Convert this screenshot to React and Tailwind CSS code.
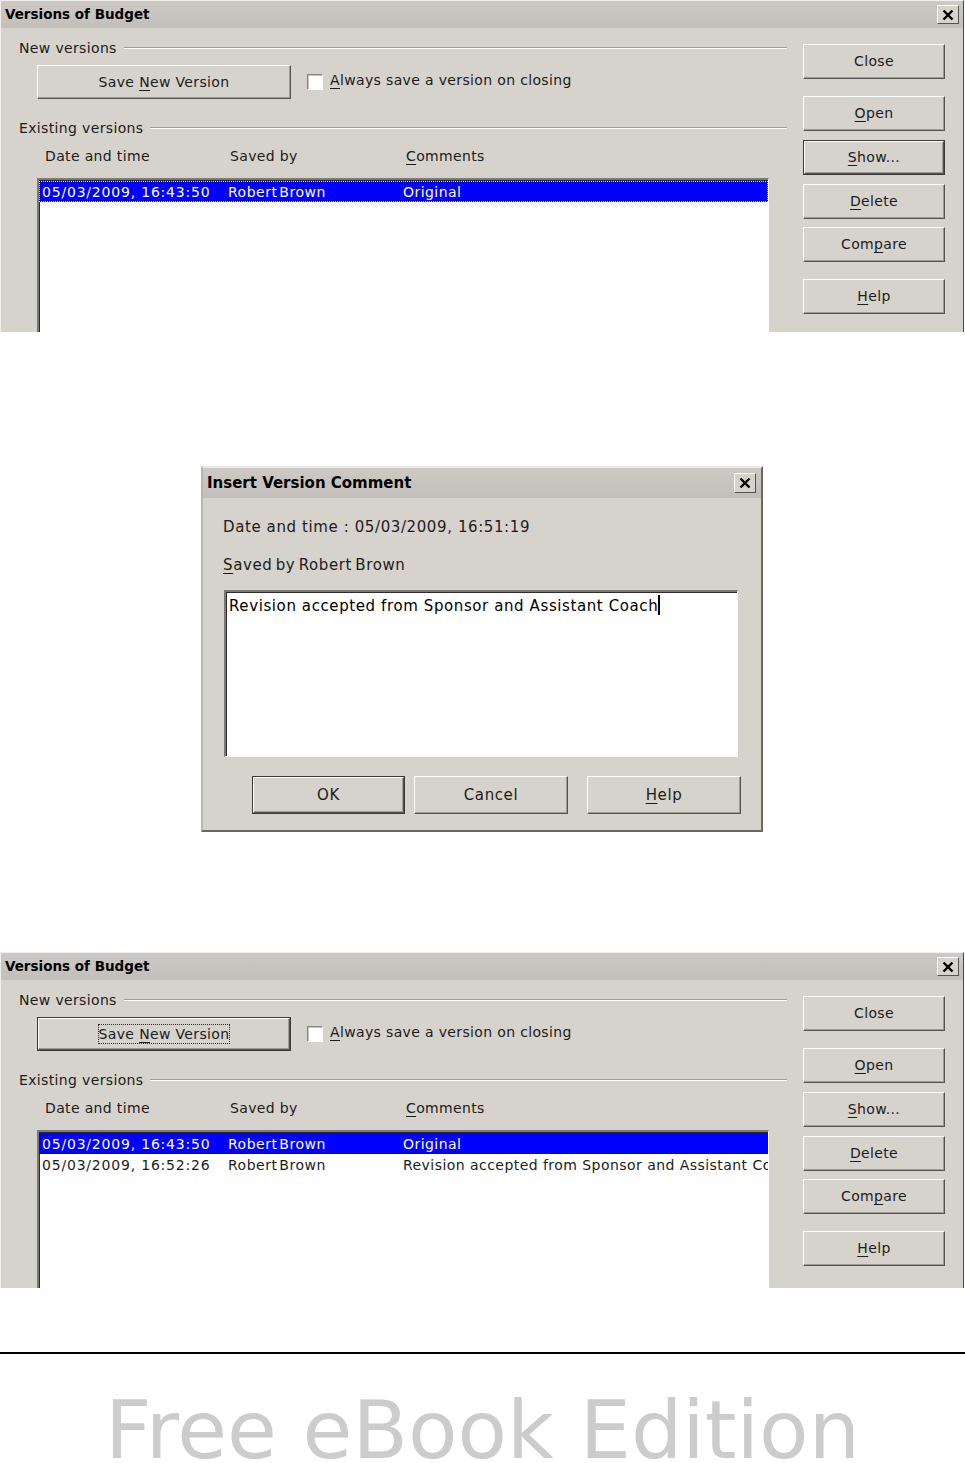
import React from 'react';

const U = ({ children }) => (
  <span className="underline decoration-1 underline-offset-[3px]">{children}</span>
);

const CloseBox = ({ className = '' }) => (
  <div className={`flex items-center justify-center border border-t-white border-l-white border-r-[#55534f] border-b-[#55534f] bg-[#d6d2cc] ${className}`}>
    <svg width="12" height="12" viewBox="0 0 12 12">
      <path d="M1.5 1.5 L10.5 10.5 M10.5 1.5 L1.5 10.5" stroke="#000" strokeWidth="2.4" />
    </svg>
  </div>
);

const Btn = ({ children, className = '', def = false, focus = false }) => (
  <div className={`${className} ${def ? 'border border-[#3a3937]' : ''}`}>
    <div className="flex h-full w-full items-center justify-center border border-t-white border-l-white border-r-[#55534f] border-b-[#55534f] bg-[#d6d2cc] shadow-[inset_-1px_-1px_0_#9e9b95] text-[#1c1c1c]">
      <span className={focus ? 'border border-dotted border-[#2a2a2a] leading-[18px]' : ''}>{children}</span>
    </div>
  </div>
);

const Group = ({ label, className = '' }) => (
  <div className={`flex h-[18px] items-center ${className}`}>
    <span className="pr-[7px] text-[#1c1c1c]">{label}</span>
    <div className="h-[2px] flex-1 border-t border-b border-t-[#a09d97] border-b-white" />
  </div>
);

const TitleBar = ({ title, className = '', textClass = '', boxClass = '' }) => (
  <div className={`flex items-center justify-between bg-gradient-to-b from-[#cdcac5] to-[#c2bfba] ${className}`}>
    <span className={`font-bold tracking-normal text-black ${textClass}`}>{title}</span>
    <CloseBox className={boxClass} />
  </div>
);

const VersionsDialog = ({ rows, saveDefault, showDefault, focusRow }) => (
  <div className="h-[336px] w-[964px] overflow-hidden border-t border-l border-r border-t-[#f0efed] border-l-[#f0efed] border-r-[#4a4946] bg-[#d6d2cc] text-[14px] tracking-[0.35px]">
    <TitleBar title="Versions of Budget" className="h-[27px] pl-[4px] pr-[4px]" textClass="text-[13.5px]" boxClass="h-[19px] w-[22px]" />
    <div className="flex">
      <div className="w-[786px] pl-[18px] pt-[11px]">
        <Group label="New versions" />
        <div className="mt-[8px] flex items-center">
          <Btn className="ml-[18px] h-[34px] w-[254px]" def={saveDefault} focus={saveDefault}>
            Save <U>N</U>ew Version
          </Btn>
          <div className="ml-[16px] h-[16px] w-[16px] border border-t-[#8a8782] border-l-[#8a8782] border-r-white border-b-white bg-white shadow-[inset_1px_1px_0_#c4c1bb]" />
          <span className="ml-[7px] -mt-[4px] text-[#1c1c1c]">
            <U>A</U>lways save a version on closing
          </span>
        </div>
        <Group label="Existing versions" className="mt-[20px]" />
        <div className="mt-[10px] flex h-[18px] items-center pl-[26px] text-[#1c1c1c]">
          <span className="w-[185px]">Date and time</span>
          <span className="w-[176px]">Saved by</span>
          <span>
            <U>C</U>omments
          </span>
        </div>
        <div className="mt-[13px] ml-[18px] h-[200px] w-[732px] border-t-2 border-l-2 border-r border-t-[#7c7974] border-l-[#7c7974] border-r-white bg-white pt-px shadow-[inset_1px_1px_0_#2c2c2c]">
          {rows.map((r, i) => (
            <div
              key={i}
              className={`flex h-[21px] items-center overflow-hidden whitespace-nowrap pl-[3px] pt-[2px] ${
                i === 0 ? 'bg-[#0000ff] text-white' : 'text-[#1c1c1c]'
              } ${i === 0 && focusRow ? 'outline-1 outline-dotted -outline-offset-1 outline-[#e8e800]' : ''}`}
            >
              <span className="w-[186px] shrink-0 tracking-[0.8px]">{r[0]}</span>
              <span className="w-[175px] shrink-0 tracking-[0.5px] [word-spacing:-3px]">{r[1]}</span>
              <span className="shrink-0 tracking-[0.45px]">{r[2]}</span>
            </div>
          ))}
        </div>
      </div>
      <div className="flex flex-col pl-[16px] pt-[16px]">
        <Btn className="h-[35px] w-[142px]">Close</Btn>
        <Btn className="mt-[17px] h-[35px] w-[142px]">
          <U>O</U>pen
        </Btn>
        <Btn className="mt-[9px] h-[35px] w-[142px]" def={showDefault}>
          <U>S</U>how...
        </Btn>
        <Btn className="mt-[9px] h-[35px] w-[142px]">
          <U>D</U>elete
        </Btn>
        <Btn className="mt-[8px] h-[35px] w-[142px]">
          Com<U>p</U>are
        </Btn>
        <Btn className="mt-[17px] h-[35px] w-[142px]">
          <U>H</U>elp
        </Btn>
      </div>
    </div>
  </div>
);

const CommentDialog = () => (
  <div className="ml-[201px] mt-[134px] h-[366px] w-[562px] border-2 border-t-[#eceae6] border-l-[#b9b6b0] border-r-[#6a6864] border-b-[#6a6864] bg-[#d6d2cc] text-[15px] tracking-[0.6px] text-[#1c1c1c]">
    <TitleBar title="Insert Version Comment" className="h-[30px] pl-[4px] pr-[5px]" textClass="text-[15px]" boxClass="h-[20px] w-[22px]" />
    <div className="pl-[20px]">
      <div className="mt-[19px] h-[20px] leading-[20px]">Date and time : 05/03/2009, 16:51:19</div>
      <div className="mt-[18px] h-[20px] leading-[20px] [word-spacing:-2px]">
        <U>S</U>aved by Robert Brown
      </div>
      <div className="mt-[15px] ml-px h-[167px] w-[514px] border-t-2 border-l-2 border-r border-b border-t-[#7c7974] border-l-[#7c7974] border-r-white border-b-white bg-white pl-[3px] pt-[3px] text-black shadow-[inset_1px_1px_0_#2c2c2c]">
        <span className="leading-[20px]">Revision accepted from Sponsor and Assistant Coach</span>
        <span className="inline-block h-[20px] w-[2px] bg-black align-top" />
      </div>
      <div className="mt-[19px] flex">
        <Btn className="ml-[29px] h-[38px] w-[153px]" def>
          OK
        </Btn>
        <Btn className="ml-[9px] h-[38px] w-[154px]">Cancel</Btn>
        <Btn className="ml-[19px] h-[38px] w-[154px]">
          <U>H</U>elp
        </Btn>
      </div>
    </div>
  </div>
);

export default function App() {
  return (
    <div className="h-[1463px] w-[965px] overflow-hidden bg-white font-['DejaVu_Sans',sans-serif]">
      <div className="h-[332px] overflow-hidden">
        <VersionsDialog
          rows={[['05/03/2009, 16:43:50', 'Robert Brown', 'Original']]}
          showDefault
          focusRow
        />
      </div>
      <CommentDialog />
      <div className="mt-[120px]">
        <VersionsDialog
          rows={[
            ['05/03/2009, 16:43:50', 'Robert Brown', 'Original'],
            ['05/03/2009, 16:52:26', 'Robert Brown', 'Revision accepted from Sponsor and Assistant Coach'],
          ]}
          saveDefault
        />
      </div>
      <div className="mt-[64px] h-[2px] bg-black" />
      <div className="pt-[46px] text-center text-[81px] leading-[60px] text-[#cccccc]">Free eBook Edition</div>
    </div>
  );
}
